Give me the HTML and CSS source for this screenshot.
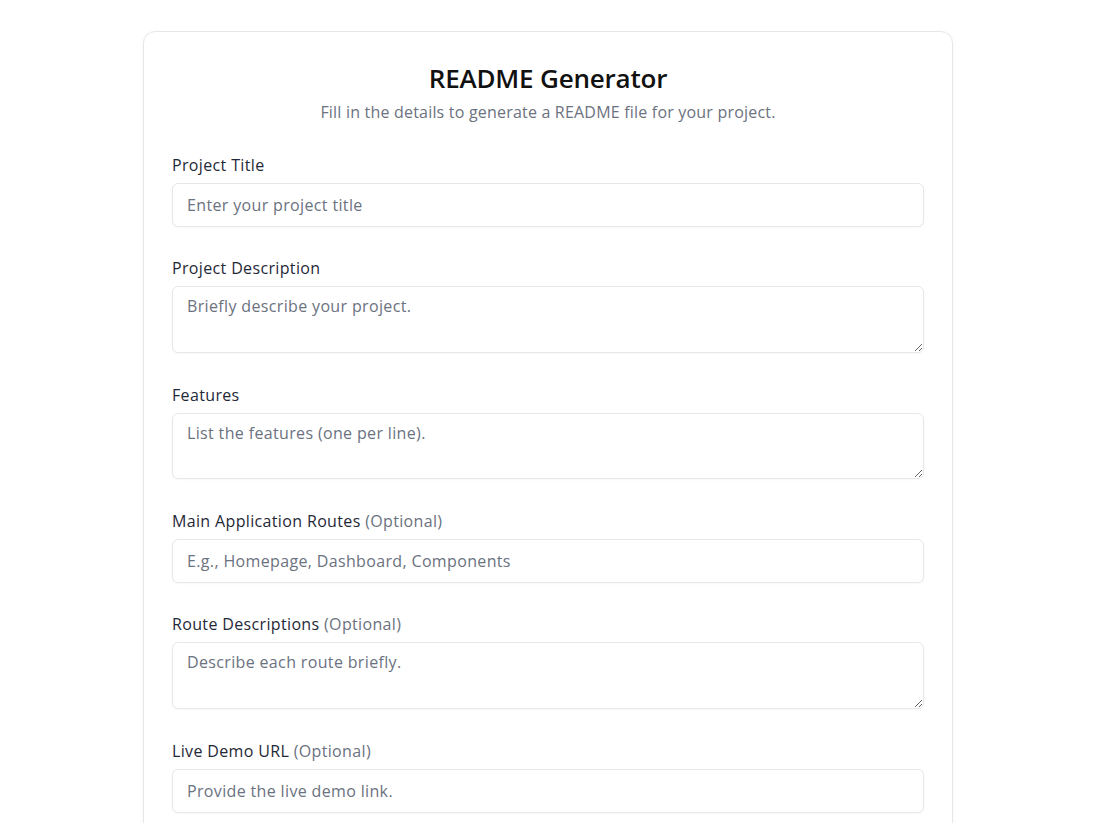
FILE: index.html
```html
<!DOCTYPE html>
<html lang="en">
<head>
<meta charset="utf-8">
<title>README Generator</title>
<link rel="stylesheet" href="styles.css">
</head>
<body>
<main class="page">
  <form class="card">
    <header class="card-head">
      <h1 class="title">README Generator</h1>
      <p class="subtitle">Fill in the details to generate a README file for your project.</p>
    </header>

    <div class="field">
      <label class="label" for="title">Project Title</label>
      <input class="input" id="title" type="text" placeholder="Enter your project title">
    </div>

    <div class="field">
      <label class="label" for="desc">Project Description</label>
      <textarea class="input area" id="desc" placeholder="Briefly describe your project."></textarea>
    </div>

    <div class="field">
      <label class="label" for="features">Features</label>
      <textarea class="input area" id="features" placeholder="List the features (one per line)."></textarea>
    </div>

    <div class="field">
      <label class="label" for="routes">Main Application Routes <span class="opt">(Optional)</span></label>
      <input class="input" id="routes" type="text" placeholder="E.g., Homepage, Dashboard, Components">
    </div>

    <div class="field">
      <label class="label" for="routedesc">Route Descriptions <span class="opt">(Optional)</span></label>
      <textarea class="input area" id="routedesc" placeholder="Describe each route briefly."></textarea>
    </div>

    <div class="field">
      <label class="label" for="demo">Live Demo URL <span class="opt">(Optional)</span></label>
      <input class="input" id="demo" type="text" placeholder="Provide the live demo link.">
    </div>
  </form>
</main>
</body>
</html>
```

FILE: styles.css
```css
* { box-sizing: border-box; }

html, body {
  margin: 0;
  padding: 0;
  background: #ffffff;
}

body {
  font-family: "Open Sans", "Noto Sans", sans-serif;
  color: #1f2937;
}

.page {
  padding: 31px 6px 0 0;
  height: 823px;
  overflow: hidden;
}

.card {
  width: 810px;
  margin: 0 auto;
  padding: 28px 28px 40px;
  border: 1px solid #e5e7eb;
  border-radius: 12px;
  background: #fff;
  box-shadow: 0 1px 3px rgba(0, 0, 0, 0.04);
  display: flex;
  flex-direction: column;
  gap: 29.7px;
}

.card-head {
  text-align: center;
  margin-bottom: -1px;
}

.title {
  margin: 0;
  font-size: 26px;
  line-height: 36px;
  font-weight: 600;
  color: #111111;
  letter-spacing: -0.2px;
}

.subtitle {
  margin: 0;
  font-size: 16px;
  line-height: 24px;
  color: #6b7280;
  margin-top: 4px;
  letter-spacing: 0.2px;
}

.field {
  display: flex;
  flex-direction: column;
  gap: 6px;
}

.label {
  font-size: 16px;
  line-height: 24px;
  color: #1f2937;
  letter-spacing: 0.35px;
}

.opt {
  color: #6b7280;
}

.input {
  display: block;
  width: 100%;
  height: 44px;
  padding: 10px 14px;
  border: 1px solid #e5e7eb;
  border-radius: 6px;
  font-family: inherit;
  font-size: 16px;
  line-height: 22px;
  letter-spacing: 0.35px;
  color: #1f2937;
  background: #fff;
  outline: none;
  box-shadow: 0 1px 2px rgba(0, 0, 0, 0.03);
}

.input::placeholder {
  color: #6b7280;
}

.area {
  height: 66.5px;
  padding-top: 8px;
  resize: vertical;
}
```
